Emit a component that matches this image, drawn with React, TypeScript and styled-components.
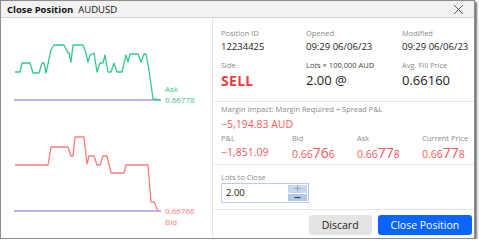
import styled, { createGlobalStyle } from 'styled-components';

const Global = createGlobalStyle`
  html, body { margin: 0; padding: 0; background: #ffffff; }
  body { font-family: "Open Sans", "Noto Sans", sans-serif; color: #222; }
`;

const GREEN = '#35c98c';
const RED = '#f25a5a';
const LINE_RED = '#ff7b7b';
const PURPLE = '#a497ef';

const askPoints = [
  [14, 72], [19, 72], [21, 63], [29, 63], [32, 73], [38, 73], [41, 63], [43, 63], [45, 73],
  [50, 50], [53, 45], [63, 45], [67, 53], [68, 53], [70, 62], [72, 45], [82, 45], [85, 53],
  [87, 62], [89, 55], [93, 53], [96, 72], [99, 63], [102, 63], [104, 55], [107, 72], [110, 72],
  [113, 63], [116, 72], [121, 72], [125, 55], [127, 62], [129, 54], [137, 54], [140, 62],
  [143, 54], [145, 54], [148, 70], [152, 99], [159, 100],
];

const bidPoints = [
  [14, 165], [47, 165], [50, 147], [67, 147], [70, 156], [72, 156], [74, 137], [83, 137],
  [86, 164], [88, 156], [93, 156], [96, 165], [99, 165], [102, 156], [106, 156], [110, 173],
  [123, 173], [125, 165], [147, 165], [150, 202], [153, 202], [157, 211],
];

const toPath = (pts: number[][], dy: number) =>
  pts.map(([x, y]) => `${x},${y - dy}`).join(' ');

function PriceChart({ points, top, baseY, color, price, side, sideFirst }: {
  points: number[][]; top: number; baseY: number; color: string; price: string; side: string; sideFirst: boolean;
}) {
  const by = baseY - top;
  return (
    <Styled.Chart width={211} height={110} viewBox="0 0 211 110">
      <line x1={13} y1={by} x2={160} y2={by} stroke={PURPLE} strokeWidth={1.3} />
      <polyline points={toPath(points, top)} fill="none" stroke={color} strokeWidth={1.3} strokeLinejoin="round" />
      <text x={164} y={sideFirst ? by - 8 : by + 3} fill={color} fontSize={8}>{sideFirst ? side : price}</text>
      <text x={164} y={sideFirst ? by + 3 : by + 14} fill={color} fontSize={8}>{sideFirst ? price : side}</text>
    </Styled.Chart>
  );
}

function Price({ head, big, tail }: { head: string; big: string; tail: string }) {
  return (
    <Styled.Quote>
      {head}<Styled.Big>{big}</Styled.Big>{tail}
    </Styled.Quote>
  );
}

function ClosePosition() {
  return (
    <Styled.Dialog>
      <Styled.TitleBar>
        <Styled.Title>Close Position</Styled.Title>
        <Styled.Symbol>AUDUSD</Styled.Symbol>
        <Styled.CloseIcon width={11} height={11} viewBox="0 0 11 11">
          <path d="M1 1 L10 10 M10 1 L1 10" stroke="#555" strokeWidth={1} />
        </Styled.CloseIcon>
      </Styled.TitleBar>
      <Styled.Body>
        <Styled.ChartPanel>
          <PriceChart points={askPoints} top={18} baseY={100} color={GREEN} price="0.66778" side="Ask" sideFirst />
          <PriceChart points={bidPoints} top={128} baseY={211} color={LINE_RED} price="0.66766" side="Bid" sideFirst={false} />
        </Styled.ChartPanel>
        <Styled.Details>
          <Styled.InfoGrid>
            <Styled.Cell>
              <Styled.Label>Position ID</Styled.Label>
              <Styled.Value>12234425</Styled.Value>
            </Styled.Cell>
            <Styled.Cell>
              <Styled.Label>Opened</Styled.Label>
              <Styled.Value>09:29 06/06/23</Styled.Value>
            </Styled.Cell>
            <Styled.Cell>
              <Styled.Label>Modified</Styled.Label>
              <Styled.Value>09:29 06/06/23</Styled.Value>
            </Styled.Cell>
            <Styled.Cell>
              <Styled.Label>Side</Styled.Label>
              <Styled.Sell>SELL</Styled.Sell>
            </Styled.Cell>
            <Styled.Cell>
              <Styled.Label $dark>Lots × 100,000 AUD</Styled.Label>
              <Styled.BigValue>2.00 @</Styled.BigValue>
            </Styled.Cell>
            <Styled.Cell>
              <Styled.Label>Avg. Fill Price</Styled.Label>
              <Styled.BigValue>0.66160</Styled.BigValue>
            </Styled.Cell>
          </Styled.InfoGrid>
          <Styled.Impact>
            <Styled.Label>Margin Impact: Margin Required + Spread P&amp;L</Styled.Label>
            <Styled.RedValue>−5,194.83 AUD</Styled.RedValue>
            <Styled.QuoteGrid>
              <Styled.Cell>
                <Styled.Label>P&amp;L</Styled.Label>
                <Styled.Quote>−1,851.09</Styled.Quote>
              </Styled.Cell>
              <Styled.Cell>
                <Styled.Label>Bid</Styled.Label>
                <Price head="0.66" big="76" tail="6" />
              </Styled.Cell>
              <Styled.Cell>
                <Styled.Label>Ask</Styled.Label>
                <Price head="0.66" big="77" tail="8" />
              </Styled.Cell>
              <Styled.Cell>
                <Styled.Label>Current Price</Styled.Label>
                <Price head="0.66" big="77" tail="8" />
              </Styled.Cell>
            </Styled.QuoteGrid>
          </Styled.Impact>
          <Styled.LotsSection>
            <Styled.Label>Lots to Close</Styled.Label>
            <Styled.Input>
              <Styled.InputText>2.00</Styled.InputText>
              <Styled.Spinner>
                <Styled.SpinButton>
                  <svg width={7} height={7} viewBox="0 0 7 7">
                    <path d="M0.5 3.5 H6.5 M3.5 0.5 V6.5" stroke="#8ea4c8" strokeWidth={1} />
                  </svg>
                </Styled.SpinButton>
                <Styled.SpinButton $minus>
                  <svg width={7} height={7} viewBox="0 0 7 7">
                    <path d="M0.5 3.5 H6.5" stroke="#34495e" strokeWidth={1.2} />
                  </svg>
                </Styled.SpinButton>
              </Styled.Spinner>
            </Styled.Input>
          </Styled.LotsSection>
          <Styled.Actions>
            <Styled.Button>Discard</Styled.Button>
            <Styled.Button $primary>Close Position</Styled.Button>
          </Styled.Actions>
        </Styled.Details>
      </Styled.Body>
    </Styled.Dialog>
  );
}

export default function App() {
  return (
    <>
      <Global />
      <ClosePosition />
    </>
  );
}

const Styled = {
  Dialog: styled.div`
    width: 473px;
    height: 237px;
    border: 1px solid #8c8c8c;
    box-shadow: 2px 2px 2px rgba(0, 0, 0, 0.55);
    background: #fff;
    display: flex;
    flex-direction: column;
    overflow: hidden;
  `,
  TitleBar: styled.div`
    height: 16px;
    flex: none;
    display: flex;
    align-items: center;
    padding: 0 6px;
    background: #f2f2f2;
    border-bottom: 1px solid #d4d4d4;
  `,
  Title: styled.span`
    font-size: 9.5px;
    font-weight: 700;
    color: #111;
  `,
  Symbol: styled.span`
    font-size: 9.5px;
    margin-left: 5px;
    color: #111;
  `,
  CloseIcon: styled.svg`
    margin-left: auto;
    margin-right: 4px;
  `,
  Body: styled.div`
    flex: 1;
    display: flex;
    min-height: 0;
  `,
  ChartPanel: styled.div`
    width: 211px;
    border-right: 1px solid #e6e6e6;
    display: flex;
    flex-direction: column;
  `,
  Chart: styled.svg`
    display: block;
    flex: none;
    font-family: "Open Sans", sans-serif;
  `,
  Details: styled.div`
    flex: 1;
    display: flex;
    flex-direction: column;
  `,
  InfoGrid: styled.div`
    display: grid;
    grid-template-columns: 85px 96px 1fr;
    row-gap: 6px;
    padding: 10px 8px 12px;
    border-bottom: 1px solid #e6e6e6;
  `,
  Cell: styled.div`
    display: flex;
    flex-direction: column;
  `,
  Label: styled.div<{ $dark?: boolean }>`
    font-size: 7.5px;
    line-height: 10px;
    color: ${({ $dark }) => ($dark ? '#444' : '#8a8a8a')};
    white-space: nowrap;
  `,
  Value: styled.div`
    font-size: 9.5px;
    line-height: 14px;
    margin-top: 2px;
    color: #222;
    white-space: nowrap;
  `,
  BigValue: styled.div`
    font-size: 13px;
    line-height: 17px;
    margin-top: 2px;
    color: #222;
  `,
  Sell: styled.div`
    font-size: 14px;
    font-weight: 700;
    line-height: 17px;
    margin-top: 2px;
    color: #f03c3c;
    letter-spacing: 0.3px;
  `,
  Impact: styled.div`
    padding: 2px 8px 1px;
    border-bottom: 1px solid #e6e6e6;
  `,
  RedValue: styled.div`
    font-size: 10.5px;
    line-height: 14px;
    margin: 3px 0 2px;
    color: ${RED};
  `,
  QuoteGrid: styled.div`
    display: grid;
    grid-template-columns: 71px 65px 65px 1fr;
  `,
  Quote: styled.div`
    font-size: 10.5px;
    line-height: 17px;
    margin-top: 1px;
    color: ${RED};
    white-space: nowrap;
  `,
  Big: styled.span`
    font-size: 14px;
  `,
  LotsSection: styled.div`
    padding: 7px 8px 6px;
    border-bottom: 1px solid #e6e6e6;
    display: flex;
    flex-direction: column;
    gap: 1px;
  `,
  Input: styled.div`
    width: 86px;
    height: 18px;
    border: 1px solid #b9cdeb;
    display: flex;
    align-items: stretch;
  `,
  InputText: styled.div`
    flex: 1;
    font-size: 9.5px;
    line-height: 18px;
    padding-left: 4px;
    color: #222;
  `,
  Spinner: styled.div`
    width: 19px;
    display: flex;
    flex-direction: column;
    gap: 1px;
    padding: 1px;
  `,
  SpinButton: styled.div<{ $minus?: boolean }>`
    flex: 1;
    display: flex;
    align-items: center;
    justify-content: center;
    background: ${({ $minus }) => ($minus ? '#b5c8e6' : '#c8d6ee')};
  `,
  Actions: styled.div`
    flex: 1;
    display: flex;
    justify-content: flex-end;
    align-items: flex-start;
    gap: 6px;
    padding: 5px 4px 0 0;
  `,
  Button: styled.button<{ $primary?: boolean }>`
    height: 20px;
    padding: 0 ${({ $primary }) => ($primary ? '13px' : '13px')};
    border: none;
    border-radius: 3px;
    font-family: "Open Sans", sans-serif;
    font-size: 10.5px;
    line-height: 20px;
    background: ${({ $primary }) => ($primary ? '#0a64ff' : '#e4e4e4')};
    color: ${({ $primary }) => ($primary ? '#fff' : '#222')};
  `,
};
